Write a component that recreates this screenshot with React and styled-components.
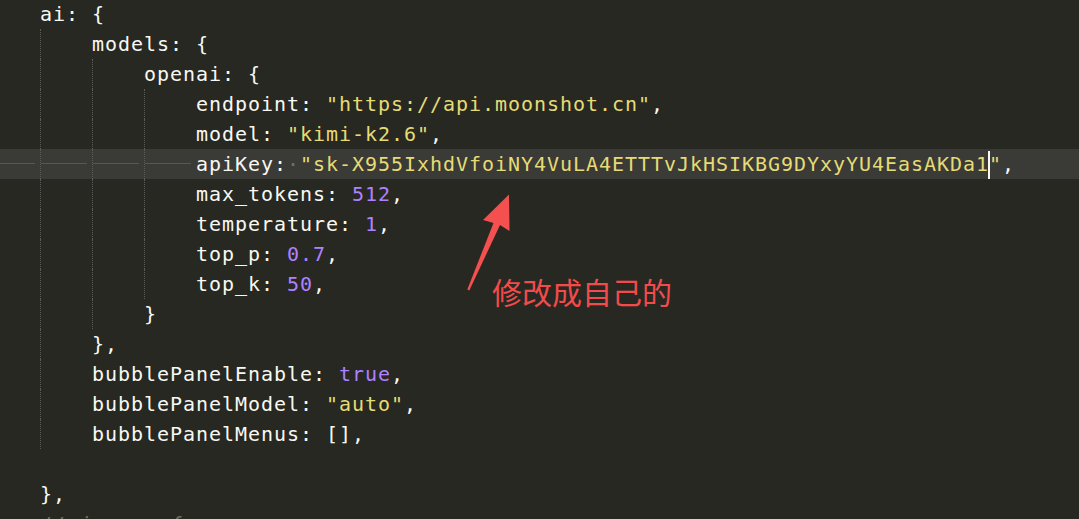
import styled, { createGlobalStyle } from "styled-components";

const Global = createGlobalStyle`
  html, body {
    margin: 0;
    padding: 0;
    background: #272822;
    overflow: hidden;
  }
`;

const colors = {
  k: "#f8f8f2",
  p: "#f8f8f2",
  s: "#e6db74",
  n: "#ae81ff",
  c: "#75715e",
};

const lines = [
  { depth: 1, tokens: [["k", "ai"], ["p", ": {"]] },
  { depth: 2, tokens: [["k", "models"], ["p", ": {"]] },
  { depth: 3, tokens: [["k", "openai"], ["p", ": {"]] },
  { depth: 4, tokens: [["k", "endpoint"], ["p", ": "], ["s", '"https://api.moonshot.cn"'], ["p", ","]] },
  { depth: 4, tokens: [["k", "model"], ["p", ": "], ["s", '"kimi-k2.6"'], ["p", ","]] },
  {
    depth: 4,
    active: true,
    tokens: [["k", "apiKey"], ["p", ":"], ["dot"], ["s", '"sk-X955IxhdVfoiNY4VuLA4ETTTvJkHSIKBG9DYxyYU4EasAKDa1'], ["caret"], ["s", '"'], ["p", ","]],
  },
  { depth: 4, tokens: [["k", "max_tokens"], ["p", ": "], ["n", "512"], ["p", ","]] },
  { depth: 4, tokens: [["k", "temperature"], ["p", ": "], ["n", "1"], ["p", ","]] },
  { depth: 4, tokens: [["k", "top_p"], ["p", ": "], ["n", "0.7"], ["p", ","]] },
  { depth: 4, tokens: [["k", "top_k"], ["p", ": "], ["n", "50"], ["p", ","]] },
  { depth: 3, tokens: [["p", "}"]] },
  { depth: 2, tokens: [["p", "},"]] },
  { depth: 2, tokens: [["k", "bubblePanelEnable"], ["p", ": "], ["n", "true"], ["p", ","]] },
  { depth: 2, tokens: [["k", "bubblePanelModel"], ["p", ": "], ["s", '"auto"'], ["p", ","]] },
  { depth: 2, tokens: [["k", "bubblePanelMenus"], ["p", ": [],"]] },
  { depth: 0, tokens: [] },
  { depth: 1, tokens: [["p", "},"]] },
  { depth: 1, tokens: [["c", "// image: {"]] },
];

const App = () => (
  <Page>
    <Global />
    <Editor>
      {lines.map((line, i) => (
        <Line key={i} $active={line.active}>
          {Array.from({ length: line.depth }).map((_, t) => (
            <Tab key={t} $active={line.active} />
          ))}
          <Code>
            {line.tokens.map(([type, text], j) => {
              if (type === "dot") return <Dot key={j}>·</Dot>;
              if (type === "caret") return <Caret key={j} />;
              return (
                <Token key={j} $type={type}>
                  {text}
                </Token>
              );
            })}
          </Code>
        </Line>
      ))}
    </Editor>

    <Arrow width="60" height="110" viewBox="460 188 60 110">
      <polygon
        points="509,194.5 509.5,231 500,225 469.3,290.5 467.3,289.6 493.5,223 483,220"
        fill="#f55050"
      />
    </Arrow>
    <Note>修改成自己的</Note>
  </Page>
);

export default App;

const Page = styled.div`
  position: relative;
  width: 1079px;
  height: 519px;
  overflow: hidden;
  background: #272822;
`;

const Editor = styled.div`
  display: flex;
  flex-direction: column;
  margin: -1px 0 0 -12px;
`;

const Line = styled.div`
  display: flex;
  align-items: center;
  height: 30px;
  flex: none;
  background: ${(p) => (p.$active ? "#3a3a37" : "transparent")};
`;

const Tab = styled.span`
  flex: none;
  width: 52px;
  height: 30px;
  box-sizing: border-box;
  border-left: 1px dotted #5c5c56;
  background: ${(p) =>
    p.$active
      ? "linear-gradient(#58584f, #58584f) 0 14px / 46px 1px no-repeat"
      : "none"};
`;

const Code = styled.span`
  font-family: "DejaVu Sans Mono", "Liberation Mono", monospace;
  font-size: 20px;
  letter-spacing: 0.959px;
  line-height: 30px;
  white-space: pre;
  color: #f8f8f2;
`;

const Token = styled.span`
  color: ${(p) => colors[p.$type]};
  font-style: ${(p) => (p.$type === "c" ? "italic" : "normal")};
`;

const Dot = styled.span`
  color: #6e6e66;
`;

const Caret = styled.span`
  display: inline-block;
  width: 2px;
  height: 28px;
  margin: 0 -1px 0 -1px;
  vertical-align: middle;
  background: #f8f8f0;
`;

const Arrow = styled.svg`
  position: absolute;
  left: 460px;
  top: 188px;
`;

const Note = styled.div`
  position: absolute;
  left: 492px;
  top: 276px;
  font-family: "Noto Sans CJK SC", sans-serif;
  font-size: 30px;
  line-height: 30px;
  color: #f24b4b;
  white-space: nowrap;
`;
